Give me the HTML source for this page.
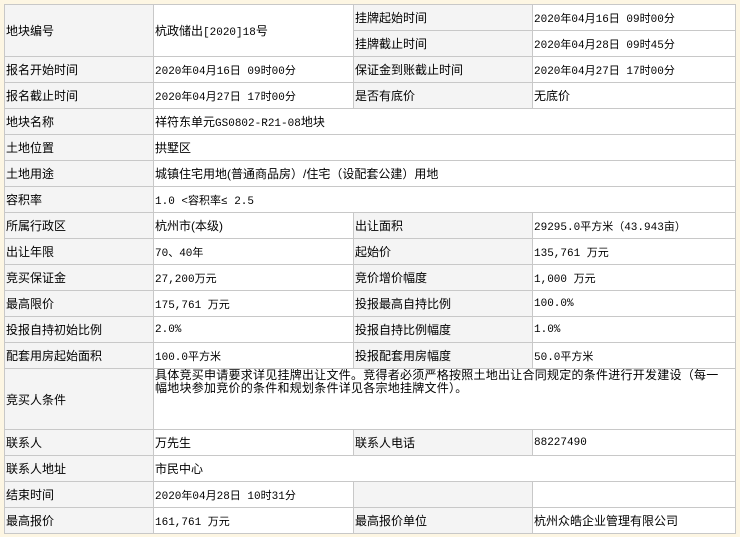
<!DOCTYPE html>
<html><head><meta charset="utf-8"><style>
html,body{margin:0;padding:0;background:#fdf6e3;width:740px;height:537px;overflow:hidden}
table{position:absolute;left:4px;top:4px;border-collapse:collapse;table-layout:fixed;width:731px;font-family:"Liberation Sans","WenQuanYi Zen Hei","Noto Sans CJK SC",sans-serif;font-size:12px;color:#000}
td{border:1px solid #c8c8c8;padding:0 0 0 1px;height:25px;white-space:nowrap;overflow:hidden;background:#fff;vertical-align:middle}
td.l{background:#f4f4f4}
td.n{font-family:"Liberation Mono","WenQuanYi Zen Hei",monospace;font-size:11px}
tr.t td{height:60px}
td.c{white-space:normal;vertical-align:top;line-height:13px;padding-top:0}
</style></head><body>
<table>
<colgroup><col style="width:149px"><col style="width:200px"><col style="width:179px"><col style="width:203px"></colgroup>
<tr><td class="l" rowspan="2">地块编号</td><td rowspan="2">杭政储出<span style="font-family:'Liberation Mono',monospace;font-size:11px">[2020]18</span>号</td><td class="l">挂牌起始时间</td><td class="n">2020年04月16日 09时00分</td></tr>
<tr><td class="l">挂牌截止时间</td><td class="n">2020年04月28日 09时45分</td></tr>
<tr><td class="l">报名开始时间</td><td class="n">2020年04月16日 09时00分</td><td class="l">保证金到账截止时间</td><td class="n">2020年04月27日 17时00分</td></tr>
<tr><td class="l">报名截止时间</td><td class="n">2020年04月27日 17时00分</td><td class="l">是否有底价</td><td>无底价</td></tr>
<tr><td class="l">地块名称</td><td colspan="3">祥符东单元<span style="font-family:'Liberation Mono',monospace;font-size:11px">GS0802-R21-08</span>地块</td></tr>
<tr><td class="l">土地位置</td><td colspan="3">拱墅区</td></tr>
<tr><td class="l">土地用途</td><td colspan="3">城镇住宅用地(普通商品房）/住宅（设配套公建）用地</td></tr>
<tr><td class="l">容积率</td><td colspan="3" class="n">1.0 &lt;容积率≤ 2.5</td></tr>
<tr><td class="l">所属行政区</td><td>杭州市(本级)</td><td class="l">出让面积</td><td class="n">29295.0平方米（43.943亩）</td></tr>
<tr><td class="l">出让年限</td><td class="n">70、40年</td><td class="l">起始价</td><td class="n">135,761 万元</td></tr>
<tr><td class="l">竞买保证金</td><td class="n">27,200万元</td><td class="l">竞价增价幅度</td><td class="n">1,000 万元</td></tr>
<tr><td class="l">最高限价</td><td class="n">175,761 万元</td><td class="l">投报最高自持比例</td><td class="n">100.0%</td></tr>
<tr><td class="l">投报自持初始比例</td><td class="n">2.0%</td><td class="l">投报自持比例幅度</td><td class="n">1.0%</td></tr>
<tr><td class="l">配套用房起始面积</td><td class="n">100.0平方米</td><td class="l">投报配套用房幅度</td><td class="n">50.0平方米</td></tr>
<tr class="t"><td class="l">竞买人条件</td><td colspan="3" class="c" style="letter-spacing:0.25px">具体竞买申请要求详见挂牌出让文件。竞得者必须严格按照土地出让合同规定的条件进行开发建设（每一<br>幅地块参加竞价的条件和规划条件详见各宗地挂牌文件）。</td></tr>
<tr><td class="l">联系人</td><td>万先生</td><td class="l">联系人电话</td><td class="n">88227490</td></tr>
<tr><td class="l">联系人地址</td><td colspan="3">市民中心</td></tr>
<tr><td class="l">结束时间</td><td class="n">2020年04月28日 10时31分</td><td class="l"></td><td></td></tr>
<tr><td class="l">最高报价</td><td class="n">161,761 万元</td><td class="l">最高报价单位</td><td>杭州众皓企业管理有限公司</td></tr>
</table>
</body></html>
